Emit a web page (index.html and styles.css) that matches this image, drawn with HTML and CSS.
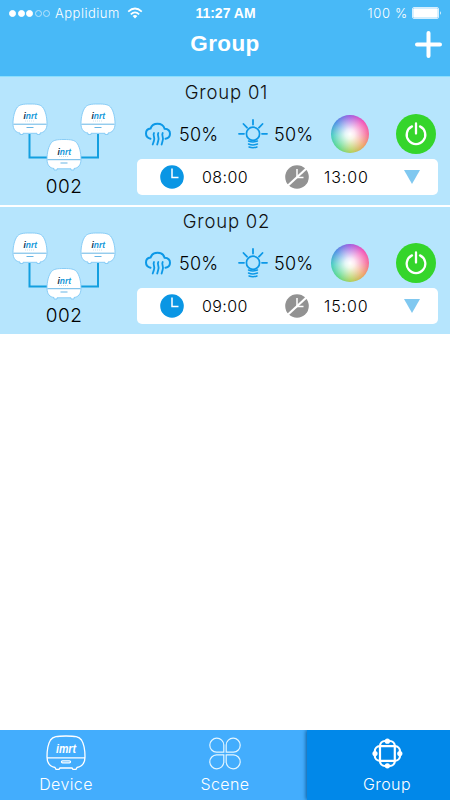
FILE: index.html
```html
<!DOCTYPE html>
<html lang="en">
<head>
  <meta charset="UTF-8">
  <meta name="viewport" content="width=device-width, initial-scale=1.0">
  <title>Group</title>
  <link rel="stylesheet" href="styles.css">
</head>
<body>
  <!-- Shared icons -->
  <svg class="icon-defs" width="0" height="0">
    <defs>
      <symbol id="device" viewBox="0 0 38 34">
        <path class="device-body" d="M19 1.500C12 1.500 9 2 6.500 4.500C3.500 8 2 15 2 21C2 27.500 5 30 9 30.500V32H12V30.800H26V32H29V30.500C33 30 36 27.500 36 21C36 15 34.500 8 31.500 4.500C29 2 26 1.500 19 1.500Z"/>
        <path class="device-line" d="M2.500 21.700H35.500M15.500 25H22.500"/>
        <text class="device-logo" x="12.500" y="16.500" textLength="13.500" lengthAdjust="spacingAndGlyphs"><tspan class="logo-dark">i</tspan>nrt</text>
        <path class="device-dots" d="M14 18.500H24"/>
      </symbol>
      <symbol id="cluster" viewBox="0 0 118 72">
        <path class="wire" d="M24.500 32V55.500H93V32"/>
        <use href="#device" x="6" y="0.500" width="38" height="34"/>
        <use href="#device" x="74" y="0.500" width="38" height="34"/>
        <use href="#device" x="40" y="36" width="38" height="34"/>
      </symbol>
      <symbol id="mist" viewBox="0 0 26 24">
        <path d="M5.500 16.800C2.500 16 1 14 1 11.500C1 8.700 3 6.900 5.500 6.600C6.500 3.800 9.500 1.800 12.500 1.800C16 1.800 18.700 3.800 19.600 6.700C22.700 6.900 25 8.700 25 11.700C25 14.500 23.200 16.300 20.500 16.800" stroke-width="2"/>
        <path d="M9 11C7.500 13.500 10.300 15.500 9 18.500C8.700 20 8 21.500 7.700 22.500M13.300 11C11.800 13.500 14.600 15.500 13.300 18.500C13 20 12.400 21.500 12.200 22.500M17.700 11C16.200 13.500 19 15.500 17.700 18.500C17.400 20 16.800 21.500 16.600 22.500" stroke-width="1.800"/>
      </symbol>
      <symbol id="bulb" viewBox="0 0 30 30">
        <path d="M15 1V5.500M5.500 5L9 8.700M24.500 5L21 8.700M1 14.800H6M24 14.800H29" stroke-width="1.800"/>
        <circle cx="15" cy="14.800" r="6.600" stroke-width="1.700"/>
        <path d="M10.500 22Q15 23.800 19.500 22M10.500 25Q15 26.800 19.500 25M11 28Q15 29.500 19 28" stroke-width="1.500"/>
      </symbol>
      <symbol id="clock-on" viewBox="0 0 24 24">
        <circle cx="12" cy="12" r="11.800" fill="#0a96e4"/>
        <path d="M12 3.500V12.500H18.500" stroke="#fff" stroke-width="1.500" fill="none"/>
      </symbol>
      <symbol id="clock-off" viewBox="0 0 24 24">
        <circle cx="12" cy="12" r="11.800" fill="#929292"/>
        <path d="M12 4V12.500H18.500" stroke="#fff" stroke-width="1.500" fill="none"/>
        <path d="M3 20.500L22 3" stroke="#fff" stroke-width="2.200"/>
      </symbol>
      <symbol id="power" viewBox="0 0 24 24">
        <path d="M8 4.400A9.300 9.300 0 1 0 16 4.400M12 1.500V11.500" fill="none" stroke="#fff" stroke-width="2.300" stroke-linecap="round"/>
      </symbol>
    </defs>
  </svg>

  <div class="app">
    <header class="header">
      <div class="status-bar">
        <div class="carrier">
          <div class="signal">
            <span class="dot full"></span>
            <span class="dot full"></span>
            <span class="dot full"></span>
            <span class="dot"></span>
            <span class="dot"></span>
          </div>
          <span class="carrier-name">Applidium</span>
          <svg class="wifi" viewBox="0 0 16 12">
            <path d="M1.200 4.600Q8 -1.600 14.800 4.600M3.800 7.300Q8 3.300 12.200 7.300" fill="none" stroke="#fff" stroke-width="1.700"/>
            <path d="M5.600 9Q8 7 10.400 9L8 11.500Z" fill="#fff"/>
          </svg>
        </div>
        <span class="clock">11:27 AM</span>
        <div class="battery">
          <span class="battery-level">100 %</span>
          <svg class="battery-icon" viewBox="0 0 30 12">
            <rect x="0.500" y="0.500" width="26" height="11" rx="1.500" fill="none" stroke="#d5eefd"/>
            <rect x="1.200" y="1.200" width="24.600" height="9.600" rx="1" fill="#fff"/>
            <path d="M28 4Q29.800 6 28 8Z" fill="#fff"/>
          </svg>
        </div>
      </div>
      <div class="title-bar">
        <h1 class="title">Group</h1>
        <svg class="add" viewBox="0 0 27 27">
          <path d="M13.500 2V25M2 13.500H25" stroke="#fff" stroke-width="4" stroke-linecap="round"/>
        </svg>
      </div>
    </header>

    <main class="group-list">
      <section class="group">
        <h2 class="group-name">Group 01</h2>
        <div class="group-body">
          <div class="devices">
            <svg class="cluster"><use href="#cluster"/></svg>
            <span class="device-count">002</span>
          </div>
          <div class="controls">
            <div class="settings">
              <svg class="mist"><use href="#mist"/></svg>
              <span class="level">50%</span>
              <svg class="bulb"><use href="#bulb"/></svg>
              <span class="level">50%</span>
              <span class="color-wheel"></span>
              <span class="power"><svg><use href="#power"/></svg></span>
            </div>
            <div class="timer">
              <svg class="timer-icon"><use href="#clock-on"/></svg>
              <span class="time">08:00</span>
              <svg class="timer-icon"><use href="#clock-off"/></svg>
              <span class="time">13:00</span>
              <span class="arrow"></span>
            </div>
          </div>
        </div>
      </section>

      <section class="group">
        <h2 class="group-name">Group 02</h2>
        <div class="group-body">
          <div class="devices">
            <svg class="cluster"><use href="#cluster"/></svg>
            <span class="device-count">002</span>
          </div>
          <div class="controls">
            <div class="settings">
              <svg class="mist"><use href="#mist"/></svg>
              <span class="level">50%</span>
              <svg class="bulb"><use href="#bulb"/></svg>
              <span class="level">50%</span>
              <span class="color-wheel"></span>
              <span class="power"><svg><use href="#power"/></svg></span>
            </div>
            <div class="timer">
              <svg class="timer-icon"><use href="#clock-on"/></svg>
              <span class="time">09:00</span>
              <svg class="timer-icon"><use href="#clock-off"/></svg>
              <span class="time">15:00</span>
              <span class="arrow"></span>
            </div>
          </div>
        </div>
      </section>
    </main>

    <nav class="tab-bar">
      <div class="tab tab-device">
        <svg class="tab-icon" viewBox="0 0 42 36">
          <g fill="none" stroke="#fff" stroke-width="1.300">
            <path d="M21 1C12 1 8 1.500 5.500 5C3 9 2 17 2 22C2 29 5 31.500 10 32.500L11 34.300H14L15 33H27L28 34.300H31L32 32.500C37 31.500 40 29 40 22C40 17 39 9 36.500 5C34 1.500 30 1 21 1Z"/>
            <path d="M2 22.800H40"/>
            <rect x="16.500" y="25.800" width="9" height="2" rx="1"/>
          </g>
          <text class="tab-logo" x="11" y="18" textLength="20" lengthAdjust="spacingAndGlyphs">imrt</text>
        </svg>
        <span class="tab-label">Device</span>
      </div>
      <div class="tab tab-scene">
        <svg class="tab-icon" viewBox="0 0 42 36">
          <path d="M19.800 17.200H12.500A7 7 0 1 1 19.800 10ZM22.200 17.200H29.500A7 7 0 1 0 22.200 10ZM19.800 19.800H12.500A7 7 0 1 0 19.800 27ZM22.200 19.800H29.500A7 7 0 1 1 22.200 27Z" fill="none" stroke="#e2f5ff" stroke-width="1.200"/>
        </svg>
        <span class="tab-label">Scene</span>
      </div>
      <div class="tab tab-group active">
        <svg class="tab-icon" viewBox="0 0 42 36">
          <g fill="none" stroke="#fff" stroke-width="2.200">
            <rect x="14" y="6" width="14.800" height="25" rx="5"/>
            <rect x="8.800" y="11.200" width="25.200" height="14.600" rx="5"/>
          </g>
          <g fill="#fff">
            <circle cx="21.400" cy="6.200" r="2.600"/>
            <circle cx="21.400" cy="30.800" r="2.600"/>
            <circle cx="9" cy="18.500" r="2.600"/>
            <circle cx="33.800" cy="18.500" r="2.600"/>
          </g>
        </svg>
        <span class="tab-label">Group</span>
      </div>
    </nav>
  </div>
</body>
</html>
```

FILE: styles.css
```css
* {
  box-sizing: border-box;
}

body {
  margin: 0;
  font-family: Inter, "Liberation Sans", sans-serif;
  background-color: #fff;
}

.icon-defs {
  display: block;
}

.app {
  display: flex;
  flex-direction: column;
  width: 450px;
  height: 800px;
  overflow: hidden;
}

/* Header */
.header {
  height: 76px;
  background-color: #48b9f7;
  color: #fff;
}

.status-bar {
  display: grid;
  grid-template-columns: 1fr auto 1fr;
  align-items: center;
  height: 26px;
  padding: 0 8px 0 9px;
  font-family: "Liberation Sans", Arial, sans-serif;
  font-size: 13px;
}

.carrier,
.battery,
.signal {
  display: flex;
  align-items: center;
}

.signal {
  gap: 1.500px;
  margin-right: 5px;
}

.dot {
  width: 7px;
  height: 7px;
  border: 1px solid #b9e3fc;
  border-radius: 50%;
}

.dot.full {
  background-color: #fff;
  border-color: #fff;
}

.carrier-name {
  font-family: Inter, sans-serif;
  font-weight: 300;
  letter-spacing: 0.500px;
}

.wifi {
  width: 16px;
  height: 12px;
  margin-left: 7px;
}

.clock {
  font-weight: bold;
  font-size: 14px;
}

.battery {
  justify-content: flex-end;
}

.battery-level {
  font-weight: 300;
  font-family: Inter, sans-serif;
  letter-spacing: 0.700px;
  margin-right: 4px;
}

.battery-icon {
  width: 30px;
  height: 12px;
}

.title-bar {
  display: grid;
  grid-template-columns: 1fr auto 1fr;
  align-items: center;
  height: 36px;
  padding: 0 8px;
}

.title {
  grid-column: 2;
  margin: 0;
  font-family: "Liberation Sans", Arial, sans-serif;
  font-size: 22.500px;
  line-height: 36px;
  letter-spacing: 0.400px;
}

.add {
  justify-self: end;
  width: 27px;
  height: 27px;
}

/* Groups */
.group-list {
  flex: 1;
}

.group {
  height: 129px;
  background-color: #b6e5fd;
  border-top: 1px solid #8bdffd;
}

.group + .group {
  border-top: 2px solid #fff;
}

.group-name {
  height: 30px;
  margin: 0;
  padding-left: 3px;
  text-align: center;
  font-size: 18.500px;
  line-height: 30px;
  font-weight: 300;
  letter-spacing: 0.800px;
  color: #111;
}

.group + .group .group-name {
  height: 29px;
  line-height: 28px;
}

.group-body {
  display: flex;
}

.devices {
  display: flex;
  flex-direction: column;
  width: 137px;
  padding-left: 5px;
}

.cluster {
  width: 118px;
  height: 72px;
  margin-top: -5px;
}

.device-count {
  width: 118px;
  text-align: center;
  font-size: 19px;
  line-height: 22px;
  font-weight: 300;
  letter-spacing: 0.500px;
  margin-top: 2px;
}

.device-body {
  fill: #fff;
  stroke: #80c8f5;
  stroke-width: 0.900;
}

.device-line {
  fill: none;
  stroke: #66b5e5;
  stroke-width: 1;
}

.device-logo {
  font-family: "Liberation Sans", Arial, sans-serif;
  font-size: 9px;
  font-weight: bold;
  font-style: italic;
  fill: #1598da;
}

.logo-dark {
  fill: #102d42;
}

.device-dots {
  stroke: #b9d4e4;
  stroke-width: 0.700;
  stroke-dasharray: 1 1;
}

.wire {
  fill: none;
  stroke: #139fe0;
  stroke-width: 2;
}

.controls {
  width: 301px;
}

.settings {
  display: flex;
  align-items: center;
  height: 52px;
  padding: 2px 2px 0 8px;
}

.mist,
.bulb {
  flex: none;
  fill: none;
  stroke: #0c98e7;
  stroke-linecap: round;
}

.mist {
  width: 26px;
  height: 24px;
}

.bulb {
  width: 30px;
  height: 30px;
  margin-left: 2px;
}

.level {
  font-size: 18px;
  font-weight: 300;
  letter-spacing: 0.200px;
}

.mist + .level {
  width: 65px;
  padding-left: 8px;
}

.bulb + .level {
  width: 63px;
  padding-left: 6px;
}

.color-wheel {
  flex: none;
  width: 38px;
  height: 38px;
  border-radius: 50%;
  background:
    radial-gradient(circle, #fff 0%, rgba(255, 255, 255, 0.850) 18%, rgba(255, 255, 255, 0) 70%),
    conic-gradient(#a05ae0, #f050b8 45deg, #f56898 90deg, #eda062 130deg, #b3cf55 175deg, #5cd98a 220deg, #45ccc0 265deg, #498fe4 310deg, #a05ae0);
}

.power {
  display: flex;
  flex: none;
  justify-content: center;
  align-items: center;
  width: 40px;
  height: 40px;
  margin-left: auto;
  border-radius: 50%;
  background-color: #35d52b;
}

.power svg {
  width: 24px;
  height: 24px;
}

.timer {
  display: flex;
  align-items: center;
  height: 36px;
  padding: 0 18px 0 23px;
  border-radius: 5px;
  background-color: #fff;
}

.timer-icon {
  flex: none;
  width: 24px;
  height: 24px;
}

.time {
  width: 101px;
  padding-left: 18px;
  font-size: 16px;
  font-weight: 300;
  letter-spacing: 0.400px;
}

.timer-icon:first-child + .time {
  flex: none;
}

.timer-icon + .time:nth-child(4) {
  width: 80px;
  padding-left: 15px;
  letter-spacing: 0.900px;
}

.arrow {
  margin-left: auto;
  border-left: 8px solid transparent;
  border-right: 8px solid transparent;
  border-top: 14px solid #80c8f0;
}

/* Tab bar */
.tab-bar {
  display: grid;
  grid-template-columns: 132px 175px 143px;
  height: 70px;
  overflow: hidden;
  background-color: #43adfd;
  color: #fff;
}

.tab {
  display: flex;
  flex-direction: column;
  align-items: center;
  padding-top: 5px;
}

.tab-scene {
  padding-left: 11px;
}

.tab-group {
  padding-left: 17px;
}

.tab.active {
  background-color: #0188e9;
  box-shadow: -1px 0 4px #0b5c9c;
}

.tab-icon {
  width: 42px;
  height: 36px;
}

.tab-logo {
  font-family: "Liberation Sans", Arial, sans-serif;
  font-size: 13px;
  font-weight: bold;
  font-style: italic;
  fill: #fff;
}

.tab-label {
  margin-top: 2px;
  font-size: 16px;
  line-height: 22px;
  font-weight: 300;
  letter-spacing: 0.400px;
}
```
